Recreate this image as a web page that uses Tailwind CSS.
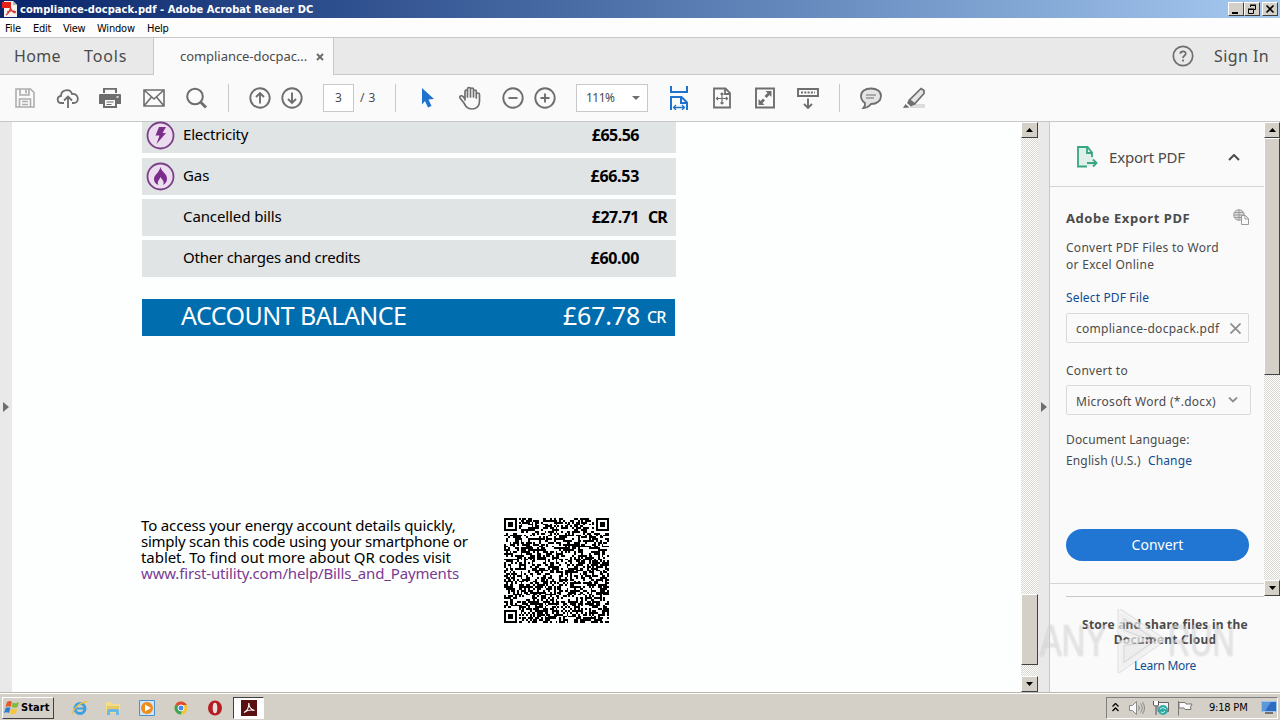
<!DOCTYPE html>
<html lang="en">
<head>
    <meta charset="UTF-8" />
    <meta name="viewport" content="width=device-width, initial-scale=1.0" />
    <title>compliance-docpack.pdf - Adobe Acrobat Reader DC</title>
    <script src="https://cdn.jsdelivr.net/npm/@tailwindcss/browser@4"></script>
</head>
<body class="w-[1280px] h-[720px] overflow-hidden flex flex-col relative bg-[#fafafa] font-['Noto_Sans',sans-serif] text-[#4b4b4b] whitespace-nowrap">

<!-- Title bar -->
<header class="h-[18px] shrink-0 flex items-center bg-linear-to-r from-[#0a246a] to-[#a6caf0] pl-0.5 pr-0.5">
    <svg class="w-4 h-4 mr-0.5" viewBox="0 0 16 16">
        <path d="M2 0h9l4 4v12H2z" fill="#f6f2f0"/>
        <path d="M11 0l4 4h-4z" fill="#b9b4b4"/>
        <path d="M0 1h9v6H0z" fill="#e2231a"/>
        <path d="M4 14c3-2 5-6 4.500-9M5 11c3-1.500 6-1.500 9 0M8.500 7c1 3 3 4.500 5 5" fill="none" stroke="#d8342a" stroke-width="1.200"/>
    </svg>
    <span class="flex-1 pt-px text-white font-bold text-[11px] leading-[18px] tracking-[0.05px] font-['DejaVu_Sans_Condensed','DejaVu_Sans',sans-serif]">compliance-docpack.pdf - Adobe Acrobat Reader DC</span>
    <div class="flex">
        <div class="w-4 h-[14px] bg-[#d4d0c8] border border-t-white border-l-white border-r-[#404040] border-b-[#404040]"><svg viewBox="0 0 14 12" class="w-[14px] h-3"><path d="M3 9h6v2H3z"/></svg></div>
        <div class="w-4 h-[14px] bg-[#d4d0c8] border border-t-white border-l-white border-r-[#404040] border-b-[#404040]"><svg viewBox="0 0 14 12" class="w-[14px] h-3" fill="none" stroke="#000"><path d="M5.500 4V2.500h5v4H9M5 2h6M3.500 6.500h5v4h-5zM3 6h6"/></svg></div>
        <div class="w-4 h-[14px] ml-0.5 bg-[#d4d0c8] border border-t-white border-l-white border-r-[#404040] border-b-[#404040]"><svg viewBox="0 0 14 12" class="w-[14px] h-3"><path d="M3.500 2.500l7 7M10.500 2.500l-7 7" stroke="#000" stroke-width="1.600"/></svg></div>
    </div>
</header>

<!-- Menu bar -->
<nav class="h-5 shrink-0 bg-[#fdfdfd] border-b border-[#c8c8c8] flex items-center pl-[5px] pt-[3px] text-[11px] text-black font-['DejaVu_Sans_Condensed','DejaVu_Sans',sans-serif]">
    <span class="w-7 tracking-[-0.1px]">File</span>
    <span class="w-[30px] tracking-[-0.3px]">Edit</span>
    <span class="w-[34px] tracking-[-0.3px]">View</span>
    <span class="w-[50px] tracking-[-0.2px]">Window</span>
    <span class="tracking-[-0.3px]">Help</span>
</nav>

<!-- Tabs -->
<div class="h-[37px] shrink-0 flex text-base bg-[#e9e9e9]">
    <div class="w-[154px] border-r border-b border-[#c8c8c8] flex items-center pl-3.5">
        <span class="w-[70px] tracking-[0.3px]">Home</span>
        <span class="tracking-[0.9px]">Tools</span>
    </div>
    <div class="w-[179px] bg-[#fafafa] flex items-center pl-[26px]">
        <span class="w-[136px] text-[13px] tracking-[-0.05px]">compliance-docpac...</span>
        <svg class="w-2 h-2" viewBox="0 0 8 8"><path d="M1 1l6 6M7 1l-6 6" stroke="#6e6e6e" stroke-width="2"/></svg>
    </div>
    <div class="flex-1 border-l border-b border-[#c8c8c8] flex items-center justify-end pr-[11px]">
        <svg class="w-[22px] h-[22px] mr-5" viewBox="0 0 22 22"><circle cx="11" cy="11" r="9.700" fill="none" stroke="#6e6e6e" stroke-width="1.700"/><path d="M8.300 8.700c.2-3.200 5.600-3.200 5.400.1-.1 1.700-2.700 2-2.700 4.200M11 14.500v2" fill="none" stroke="#6e6e6e" stroke-width="1.800"/></svg>
        <span class="tracking-[0.4px]">Sign In</span>
    </div>
</div>

<!-- Toolbar -->
<div class="h-[47px] shrink-0 flex items-center pl-[13px] border-b border-[#c8c8c8] bg-[#fafafa]">
    <svg class="w-6 h-6" viewBox="0 0 24 24" fill="none" stroke="#adadad" stroke-width="1.600"><path d="M3 3h14.500L21 6.500V21H3zM7 3v6h9V3M13 4v3.500M6.500 21v-8h11v8M9 15.500h6M9 18.500h6"/></svg>
    <svg class="w-6 h-6 ml-[19px]" viewBox="0 0 24 24" fill="none" stroke="#6e6e6e" stroke-width="1.800"><path d="M8 17H5.500C.5 17 .5 10.500 5 10c0-6.500 9-8 11-2 7-1 8 9 1.500 9H16M12 22V11M8 14.500l4-4 4 4"/></svg>
    <svg class="w-6 h-6 ml-[18px]" viewBox="0 0 24 24"><path d="M5 2h14v5H5zM1 9q0-1 1-1h20q1 0 1 1v9h-4v4H5v-4H1z" fill="#6e6e6e"/><path d="M7 3.800h10V8H7zM7 14h10v6H7z" fill="#fafafa"/><path d="M8.500 16h7M8.500 18.500h5M18 11h2" stroke="#6e6e6e" stroke-width="1.200"/><path d="M18.500 11h2" stroke="#fafafa" stroke-width="1.500"/></svg>
    <svg class="w-6 h-6 ml-5" viewBox="0 0 24 24" fill="none" stroke="#6e6e6e" stroke-width="1.600"><path d="M2 4h20v16H2zM2 4l10 9L22 4M2 20l7.500-9M22 20l-7.500-9"/></svg>
    <svg class="w-6 h-6 ml-[19px]" viewBox="0 0 24 24" fill="none" stroke="#6e6e6e"><circle cx="10" cy="10.500" r="7.800" stroke-width="2"/><path d="M15.500 16l5.500 5.500" stroke-width="2.800"/></svg>
    <div class="w-px h-7 ml-[19px] bg-[#c8c8c8]"></div>
    <svg class="w-6 h-6 ml-[19px]" viewBox="0 0 24 24" fill="none" stroke="#6e6e6e" stroke-width="1.900"><circle cx="12" cy="12" r="9.700"/><path d="M12 17.500V8M8 11l4-4 4 4"/></svg>
    <svg class="w-6 h-6 ml-2" viewBox="0 0 24 24" fill="none" stroke="#6e6e6e" stroke-width="1.900"><circle cx="12" cy="12" r="9.700"/><path d="M12 6.500V16M8 13l4 4 4-4"/></svg>
    <div class="w-[31px] h-7 ml-[19px] border border-[#c8c8c8] bg-white text-xs flex items-center justify-center">3</div>
    <span class="w-[35px] ml-1.5 text-xs tracking-[0.5px]">/ 3</span>
    <div class="w-px h-7 bg-[#c8c8c8]"></div>
    <svg class="w-6 h-6 ml-[19px]" viewBox="0 0 24 24"><path d="M7 2l12 11-5.500.500 3 6.500-3.500 1.500-3-6.500L7 18.500z" fill="#1f73ce"/></svg>
    <svg class="w-6 h-6 ml-[19px]" viewBox="0 0 24 24" fill="none" stroke="#6e6e6e" stroke-width="1.700" stroke-linejoin="round" stroke-linecap="round"><path d="M7 14V5.500c0-2 2.500-2 2.500 0V11M9.500 11V3c0-2 3-2 3 0v8M12.500 11V3.500c0-2 3-2 3 0V11M15.500 11V5.500c0-2 2.800-2 2.800 0V11M18.300 12V8.500c0-2 3.200-2 3.200 0V15c0 5-3 8-7.500 8-5 0-6.500-3-8-6l-4-5c-1-1.500 1.300-3.200 3-1.500l2 2.500"/></svg>
    <svg class="w-6 h-6 ml-[19px]" viewBox="0 0 24 24" fill="none" stroke="#6e6e6e" stroke-width="1.900"><circle cx="12" cy="12" r="9.700"/><path d="M7.500 12h9"/></svg>
    <svg class="w-6 h-6 ml-2" viewBox="0 0 24 24" fill="none" stroke="#6e6e6e" stroke-width="1.900"><circle cx="12" cy="12" r="9.700"/><path d="M7.500 12h9M12 7.500v9"/></svg>
    <div class="w-[72px] h-7 ml-[19px] border border-[#c8c8c8] bg-white text-xs flex items-center justify-between pl-[9px] pr-[7px]">
        <span class="tracking-[-0.5px]">111%</span>
        <svg class="w-2 h-1" viewBox="0 0 8 4"><path d="M0 0h8L4 4z" fill="#6e6e6e"/></svg>
    </div>
    <svg class="w-6 h-6 ml-[19px]" viewBox="0 0 24 24" fill="none" stroke="#1f73ce" stroke-width="2"><path d="M4 0v6h16V0M4 24V11h10.500L20 16.500V24M14 11v6h6"/><path d="M6.500 21.500h11M9 19l-2.500 2.500L9 24M15 19l2.500 2.500L15 24" stroke-width="1.300"/></svg>
    <svg class="w-6 h-6 ml-[19px]" viewBox="0 0 24 24" fill="none" stroke="#6e6e6e" stroke-width="1.800"><path d="M4 2.500h11.500L20 7v14.500H4zM15 3v5h5"/><path d="M6.500 12.500h11M12 7v11M10.500 8.500L12 7l1.500 1.500M10.500 16.500L12 18l1.500-1.500M8 11l-1.500 1.500L8 14M16 11l1.500 1.500L16 14" stroke-width="1.200"/></svg>
    <svg class="w-6 h-6 ml-[19px]" viewBox="0 0 24 24"><path d="M3 2.500h18v19H3z" fill="none" stroke="#6e6e6e" stroke-width="1.900"/><path d="M18.500 5v6l-2-2-3 3-2-2 3-3-2-2zM5.500 19v-6l2 2 2.500-2.500 2 2L9.500 17l2 2z" fill="#6e6e6e"/></svg>
    <svg class="w-6 h-6 ml-[19px]" viewBox="0 0 24 24" fill="none" stroke="#6e6e6e" stroke-width="1.900"><path d="M2 3h20v7H2zM12 12.500V22M8 18l4 4 4-4"/><path d="M5 6.500h14" stroke-dasharray="2 1.300"/></svg>
    <div class="w-px h-7 ml-[19px] bg-[#c8c8c8]"></div>
    <svg class="w-6 h-6 ml-[19px]" viewBox="0 0 24 24" stroke="#6e6e6e" stroke-width="1.800"><path d="M12 2.500c6 0 10 3 10 7.500s-4 8-10 8c-2 2.500-4.500 4-7.500 4 1.500-1.500 2-3 1.500-5C3.500 15.500 2 13 2 10c0-4.500 4-7.500 10-7.500z" fill="#e4e4e4"/><path d="M7 9h10M7 12h8" stroke-width="1.200"/></svg>
    <svg class="w-6 h-6 ml-[19px]" viewBox="0 0 24 24"><path d="M8 18h15v4H8z" fill="#dcdcdc"/><path d="M19 2.500l3 2v3L12.500 18l-5-4z" fill="#e4e4e4" stroke="#6e6e6e" stroke-width="1.700"/><path d="M7 13.500l5.500 5-3.500 2-4-3.500zM3.500 18l4 3.500L1 22z" fill="#6e6e6e"/></svg>
</div>

<!-- Workspace -->
<main class="flex-1 flex min-h-0">
    <div class="w-3 shrink-0 bg-[#e9e9e9] flex items-center pl-[3px]">
        <svg class="w-1.5 h-2.5" viewBox="0 0 6 10"><path d="M0 0l6 5-6 5z" fill="#6e6e6e"/></svg>
    </div>

    <!-- Document page -->
    <article class="w-[1009px] shrink-0 pl-[130px] bg-[#fcfffe] text-black text-base">
        <div class="w-[534px] flex flex-col">
            <div class="h-[31px] bg-[#e1e4e5] flex pl-1 text-[15px] leading-6">
                <svg class="w-[29px] h-[29px] mr-2 -mt-px" viewBox="0 0 29 29"><circle cx="14.500" cy="14.500" r="13" fill="#ecdcf0" stroke="#7a4186" stroke-width="1.800"/><path d="M13 6h7l-3.500 6H20l-9.500 11 3-8.500H9.500z" fill="#7b2d8b"/></svg>
                <span class="flex-1 tracking-[-0.2px]">Electricity</span>
                <b class="mr-[37px] text-base leading-[26px] tracking-[-0.5px]">£65.56</b>
            </div>
            <div class="h-[37px] mt-[5px] bg-[#e1e4e5] flex pl-1 text-[15px] leading-[34px]">
                <svg class="w-[29px] h-[29px] mr-2 mt-1" viewBox="0 0 29 29"><circle cx="14.500" cy="14.500" r="13" fill="#ecdcf0" stroke="#7a4186" stroke-width="1.800"/><path d="M14.500 5c1 5 6.500 6 6.500 12 0 3-2 5-4 6 2-4-1-5-2.500-8-1 3-4 4.500-2 8-3-1-4.500-3-4.500-6 0-4 5-6 6.500-12z" fill="#7b2d8b"/></svg>
                <span class="flex-1 tracking-[-0.1px]">Gas</span>
                <b class="mr-[37px] text-base leading-[36px] tracking-[-0.3px]">£66.53</b>
            </div>
            <div class="h-[37px] mt-1 bg-[#e1e4e5] flex pl-[41px] text-[15px] leading-[34px]">
                <span class="flex-1 tracking-[-0.1px]">Cancelled bills</span>
                <b class="text-base leading-[37px] tracking-[-0.5px]">£27.71</b>
                <b class="w-[28px] ml-[9px] text-base leading-[37px] tracking-[-1px]">CR</b>
            </div>
            <div class="h-[37px] mt-1 bg-[#e1e4e5] flex pl-[41px] text-[15px] leading-[34px]">
                <span class="flex-1 tracking-[-0.22px]">Other charges and credits</span>
                <b class="mr-[37px] text-base leading-[37px] tracking-[-0.3px]">£60.00</b>
            </div>
        </div>
        <div class="w-[533px] h-[37px] mt-[22px] bg-[#006eae] text-white flex pl-[39px] text-[25px] leading-[33px]">
            <span class="flex-1 tracking-[-0.52px]">ACCOUNT BALANCE</span>
            <span class="tracking-[-0.2px]">£67.78</span>
            <span class="w-[28px] ml-[7px] text-base leading-[36px] font-medium tracking-[-0.8px]">CR</span>
        </div>
        <div class="mt-[181px] flex">
            <p class="w-[363px] -ml-px text-[15px] leading-4"><span class="tracking-[-0.15px]">To access your energy account details quickly,</span><br><span class="tracking-[-0.24px]">simply scan this code using your smartphone or</span><br><span class="tracking-[-0.06px]">tablet. To find out more about QR codes visit</span><br><span class="text-[#7b3a92] tracking-[-0.15px]">www.first-utility.com/help/Bills_and_Payments</span></p>
            <svg id="qr" class="w-[105px] h-[105px] mt-px" viewBox="0 0 57 57" shape-rendering="crispEdges"></svg>
        </div>
    </article>

    <!-- Document scrollbar -->
    <div class="w-[17px] shrink-0 flex flex-col bg-[conic-gradient(#fff_25%,#d9d6d0_0_50%,#fff_0_75%,#d9d6d0_0)] bg-[length:2px_2px]">
        <div class="h-4 bg-[#d4d0c8] border border-t-white border-l-white border-r-[#404040] border-b-[#404040] flex items-center justify-center"><svg class="w-[7px] h-1" viewBox="0 0 7 4"><path d="M0 4h7L3.500 0z"/></svg></div>
        <div class="h-[71px] mt-[456px] bg-[#d4d0c8] border border-t-white border-l-white border-r-[#404040] border-b-[#404040]"></div>
        <div class="h-4 mt-[11px] bg-[#d4d0c8] border border-t-white border-l-white border-r-[#404040] border-b-[#404040] flex items-center justify-center"><svg class="w-[7px] h-1" viewBox="0 0 7 4"><path d="M0 0h7L3.500 4z"/></svg></div>
    </div>
    <div class="w-3 shrink-0 bg-[#e9e9e9] border-r border-[#c8c8c8] flex items-center pl-[3px]">
        <svg class="w-1.5 h-2.5" viewBox="0 0 6 10"><path d="M0 0l6 5-6 5z" fill="#6e6e6e"/></svg>
    </div>

    <!-- Tools pane -->
    <aside class="flex-1 min-w-0 bg-[#fafafa]">
        <div class="h-[474px] flex">
            <div class="flex-1 min-w-0">
                <div class="h-[65px] border-b border-[#d5d5d5] flex items-center pl-[27px] pr-6 pt-1.5">
                    <svg class="w-[21px] h-[22px] mr-[11px]" viewBox="0 0 21 22"><path d="M1 1h10l5 5v14H1z" fill="#dff0ea"/><path d="M15 11V6.500L10.500 1H1v19.500h9M10 1v6h5.500" fill="none" stroke="#38a583" stroke-width="1.800"/><path d="M10 17h9M16 13.500l3.500 3.500-3.500 3.500" fill="none" stroke="#38a583" stroke-width="1.900"/></svg>
                    <span class="flex-1 text-[15px] tracking-[-0.2px]">Export PDF</span>
                    <svg class="w-3 h-[7px]" viewBox="0 0 12 7"><path d="M1 6l5-5 5 5" fill="none" stroke="#4b4b4b" stroke-width="2"/></svg>
                </div>
                <div class="pl-4 text-xs tracking-[0.28px]">
                    <div class="w-[183px] h-[18px] mt-[23px] flex items-center justify-between">
                        <b class="text-[13px] tracking-[0.55px]">Adobe Export PDF</b>
                        <svg class="w-4 h-4 -mt-1" viewBox="0 0 16 16" fill="none" stroke="#999"><circle cx="6" cy="6" r="5.300" fill="#ddd"/><path d="M1 6h10M6 1v10M2 3.500h8M2 8.500h8"/><path d="M8.500 6.500h4l3 3v6h-7zM12 7v3h3" fill="#fafafa"/></svg>
                    </div>
                    <p class="mt-[11px] leading-[17px]">Convert PDF Files to Word<br>or Excel Online</p>
                    <div class="mt-4 leading-[17px] tracking-[0.14px] text-[#0e4d92]">Select PDF File</div>
                    <div class="w-[183px] h-[30px] mt-[7px] border border-[#dadada] rounded-xs flex items-center justify-between pl-[9px] pr-[7px]">
                        <span class="pt-px">compliance-docpack.pdf</span>
                        <svg class="w-[11px] h-[11px]" viewBox="0 0 11 11"><path d="M.500.500l10 10M10.500.500l-10 10" stroke="#8e8e8e" stroke-width="1.800"/></svg>
                    </div>
                    <div class="mt-[19px] leading-[17px]">Convert to</div>
                    <div class="w-[185px] h-[30px] mt-1.5 border border-[#dadada] rounded-xs flex items-center justify-between pl-[9px] pr-3">
                        <span class="pt-[3px]">Microsoft Word (*.docx)</span>
                        <svg class="w-2.5 h-1.5" viewBox="0 0 10 6"><path d="M1 .500l4 4 4-4" fill="none" stroke="#8e8e8e" stroke-width="1.800"/></svg>
                    </div>
                    <div class="mt-4 leading-[17px] tracking-[0.12px]">Document Language:</div>
                    <div class="mt-1 leading-[17px] tracking-[0.14px]">English (U.S.) <span class="ml-1 text-[#0e4d92]">Change</span></div>
                    <div class="w-[183px] h-8 mt-[60px] rounded-full bg-[#2076d2] text-white text-sm tracking-normal flex items-center justify-center">Convert</div>
                </div>
                <div class="mt-[22px] border-t border-[#d5d5d5]"></div>
            </div>
            <div class="w-4 flex flex-col bg-[conic-gradient(#fff_25%,#d9d6d0_0_50%,#fff_0_75%,#d9d6d0_0)] bg-[length:2px_2px]">
                <div class="h-4 bg-[#d4d0c8] border border-t-white border-l-white border-r-[#404040] border-b-[#404040] flex items-center justify-center"><svg class="w-[7px] h-1" viewBox="0 0 7 4"><path d="M0 4h7L3.500 0z"/></svg></div>
                <div class="h-[237px] bg-[#d4d0c8] border border-t-white border-l-white border-r-[#404040] border-b-[#404040]"></div>
                <div class="h-4 mt-auto bg-[#d4d0c8] border border-t-white border-l-white border-r-[#404040] border-b-[#404040] flex items-center justify-center"><svg class="w-[7px] h-1" viewBox="0 0 7 4"><path d="M0 0h7L3.500 4z"/></svg></div>
            </div>
        </div>
        <div class="ml-4 mr-4 border-t border-[#c8c8c8]"></div>
        <div class="pt-5 text-center text-xs">
            <b class="block leading-[15px] tracking-[0.22px]">Store and share files in the<br>Document Cloud</b>
            <div class="mt-[10px] leading-[17px] tracking-[-0.3px] text-[#0e4d92]">Learn More</div>
        </div>
    </aside>
</main>

<!-- Watermark -->
<div class="absolute left-[1040px] top-[608px] w-[194px] h-[66px] flex items-center justify-between text-[44px] leading-none font-['Liberation_Sans',sans-serif] text-white/45 [text-shadow:0_0_2px_#0003]">
    <span class="w-[66px]"><span class="block origin-left scale-x-74">ANY</span></span>
    <svg class="w-[56px] h-[64px]" viewBox="0 0 56 64" fill="none"><path d="M12 4l40 27-40 28V34l20-3-20-8z" fill="#bbb" fill-opacity=".2" stroke="#999" stroke-opacity=".25" stroke-width="7"/><path d="M12 4l40 27-40 28V34l20-3-20-8z" stroke="#fff" stroke-opacity=".6" stroke-width="5"/></svg>
    <span class="w-[66px]"><span class="block origin-left scale-x-70">RUN</span></span>
</div>

<!-- Taskbar -->
<footer class="h-7 shrink-0 bg-[#d4d0c8] border-t border-[#b9b6af] shadow-[inset_0_1px_0_#fff] flex items-center pl-0.5 pr-0.5 pt-0.5">
    <div class="w-[52px] h-[22px] border border-t-white border-l-white border-r-[#404040] border-b-[#404040] flex items-center pl-px text-black">
        <svg class="w-4 h-4" viewBox="0 0 16 16"><path d="M3 2q3-2 5 0L6.500 7q-2.500-1.500-5 0z" fill="#e8572a"/><path d="M9 2.500q3 1.500 6-.5l-1.500 5q-3 1.500-6 0z" fill="#7fba3c"/><path d="M1.500 8q2.500-1.500 5 0L5 13q-2.500-1.500-5 0z" fill="#2f7fd0"/><path d="M7.200 8.500q3 1.500 6 0l-1.500 5q-3 1.500-6 0z" fill="#f8c63a"/></svg>
        <b class="ml-px pt-px text-[11px] tracking-[0.1px] font-['DejaVu_Sans_Condensed','DejaVu_Sans',sans-serif]">Start</b>
    </div>
    <!-- Quick launch -->
    <svg class="w-4 h-4 ml-[18px]" viewBox="0 0 16 16" fill="none"><circle cx="8" cy="8.500" r="5" stroke="#3c9fe0" stroke-width="3"/><path d="M4 8.500h9" stroke="#3c9fe0" stroke-width="2"/><path d="M1 14C0 9 10 1 15 2" stroke="#f0c040" stroke-width="1.500"/></svg>
    <svg class="w-4 h-4 ml-[17px]" viewBox="0 0 16 16"><path d="M1 2h5l1 2h8v9H1z" fill="#f3dd8a"/><path d="M2 6h12v6H2z" fill="#e9c964"/><path d="M2 15v-4q0-2 2-2h8q2 0 2 2v4h-3v-3H5v3z" fill="#6bb7e6"/></svg>
    <svg class="w-4 h-4 ml-[18px]" viewBox="0 0 16 16"><path d="M.500.500h15v15H.500z" fill="#cfe4f6" stroke="#4a92cc"/><circle cx="8" cy="8" r="6" fill="#f08a1c"/><path d="M6 4.500l6 3.500-6 3.500z" fill="#fff"/></svg>
    <svg class="w-4 h-4 ml-[18px]" viewBox="0 0 16 16"><circle cx="8" cy="8" r="6.500" fill="#f5c52c"/><path d="M8 8L2.400 4.700A6.500 6.500 0 0 1 13.800 5H8z" fill="#df4a37"/><path d="M8 8l-5.600-3.300A6.500 6.500 0 0 0 7.500 14.500L10.500 9z" fill="#3ba55a"/><circle cx="8" cy="8" r="3" fill="#4a8af0" stroke="#fff"/></svg>
    <svg class="w-4 h-4 ml-[18px]" viewBox="0 0 16 16"><ellipse cx="8" cy="8" rx="7" ry="7.500" fill="#b71c22"/><ellipse cx="8" cy="8" rx="2.300" ry="5.300" fill="#e9e1dd"/></svg>
    <div class="w-[31px] h-[22px] ml-2.5 bg-white border border-t-[#404040] border-l-[#404040] border-r-white border-b-white flex items-center justify-center">
        <svg class="w-4 h-4" viewBox="0 0 16 16"><path d="M0 0h16v16H0z" fill="#5a0f10"/><path d="M3 12.500c3-1.500 5-5.500 4.800-9.500.2 4 2 6.500 5.700 7.500-3-1-7-.5-10.500 2z" fill="none" stroke="#fff" stroke-width="1.100"/></svg>
    </div>
    <!-- Notification area -->
    <div class="w-[172px] h-[22px] ml-auto border border-t-[#808080] border-l-[#808080] border-r-white border-b-white flex items-center pl-[5px] text-black">
        <svg class="w-[7px] h-[9px]" viewBox="0 0 7 9"><path d="M.500 3.500l3-3 3 3M.500 8l3-3 3 3" fill="none" stroke="#000" stroke-width="1.300"/></svg>
        <svg class="w-4 h-4 ml-2.5" viewBox="0 0 16 16" fill="none" stroke="#8a8a8a"><path d="M.500 5.500h3L7.500 1.500v13l-4-4h-3z" fill="#f8f8f8"/><path d="M9.500 5.500q2 2.500 0 5M11.500 3.500q3.500 4.500 0 9M13.500 2q4 6 0 12"/></svg>
        <svg class="w-4 h-4 ml-2" viewBox="0 0 16 16"><path d="M5 2.500h10.500v9H5z" fill="#f4f4f4" stroke="#666"/><path d="M.500 1v4q0 1 2.500 1t2.500-1V1M3 6v9" fill="#fff" stroke="#555"/><circle cx="10" cy="10" r="5" fill="#35a9a4"/><path d="M7 9q3-3 6 0M8 12q2 2 4-1" fill="none" stroke="#c5efe9"/></svg>
        <svg class="w-4 h-4 ml-2" viewBox="0 0 16 16" fill="#fafafa" stroke="#777"><path d="M1.500 1v14.500M2 2.500h6l1 1.500h6l-1.500 3 .500 2.500H8l-1-1.500H2z"/></svg>
        <span class="ml-4 pt-0.5 text-[11px] tracking-[-0.2px] font-['DejaVu_Sans_Condensed','DejaVu_Sans',sans-serif]">9:18 PM</span>
        <svg class="w-4 h-[13px] ml-auto" viewBox="0 0 16 13"><path d="M.500.500h15v10H.500z" fill="#2d6cc0" stroke="#9ec3ea"/><path d="M1 1h9L4 10H1z" fill="#5b97dd"/><path d="M4 12h8" stroke="#555" stroke-width="1.500"/></svg>
    </div>
</footer>

<script>
    // 57x57 modules with three finder patterns
    const size = 57;
    const finders = [[0, 0], [size - 7, 0], [0, size - 7]];
    let seed = 7;
    let d = '';

    function isDark(x, y) {
      for (const [fx, fy] of finders) {
        const dx = Math.abs(x - fx - 3);
        const dy = Math.abs(y - fy - 3);
        const ring = Math.max(dx, dy);
        if (ring <= 4) return ring !== 2 && ring !== 4;
      }
      seed = (seed * 16807) % 2147483647;
      return seed / 2147483647 < 0.54;
    }

    for (let y = 0; y < size; y++) {
      for (let x = 0; x < size; x++) {
        if (isDark(x, y)) d += `M${x} ${y}h1v1h-1z`;
      }
    }
    document.getElementById('qr').innerHTML = `<path d="${d}" />`;
</script>
</body>
</html>
